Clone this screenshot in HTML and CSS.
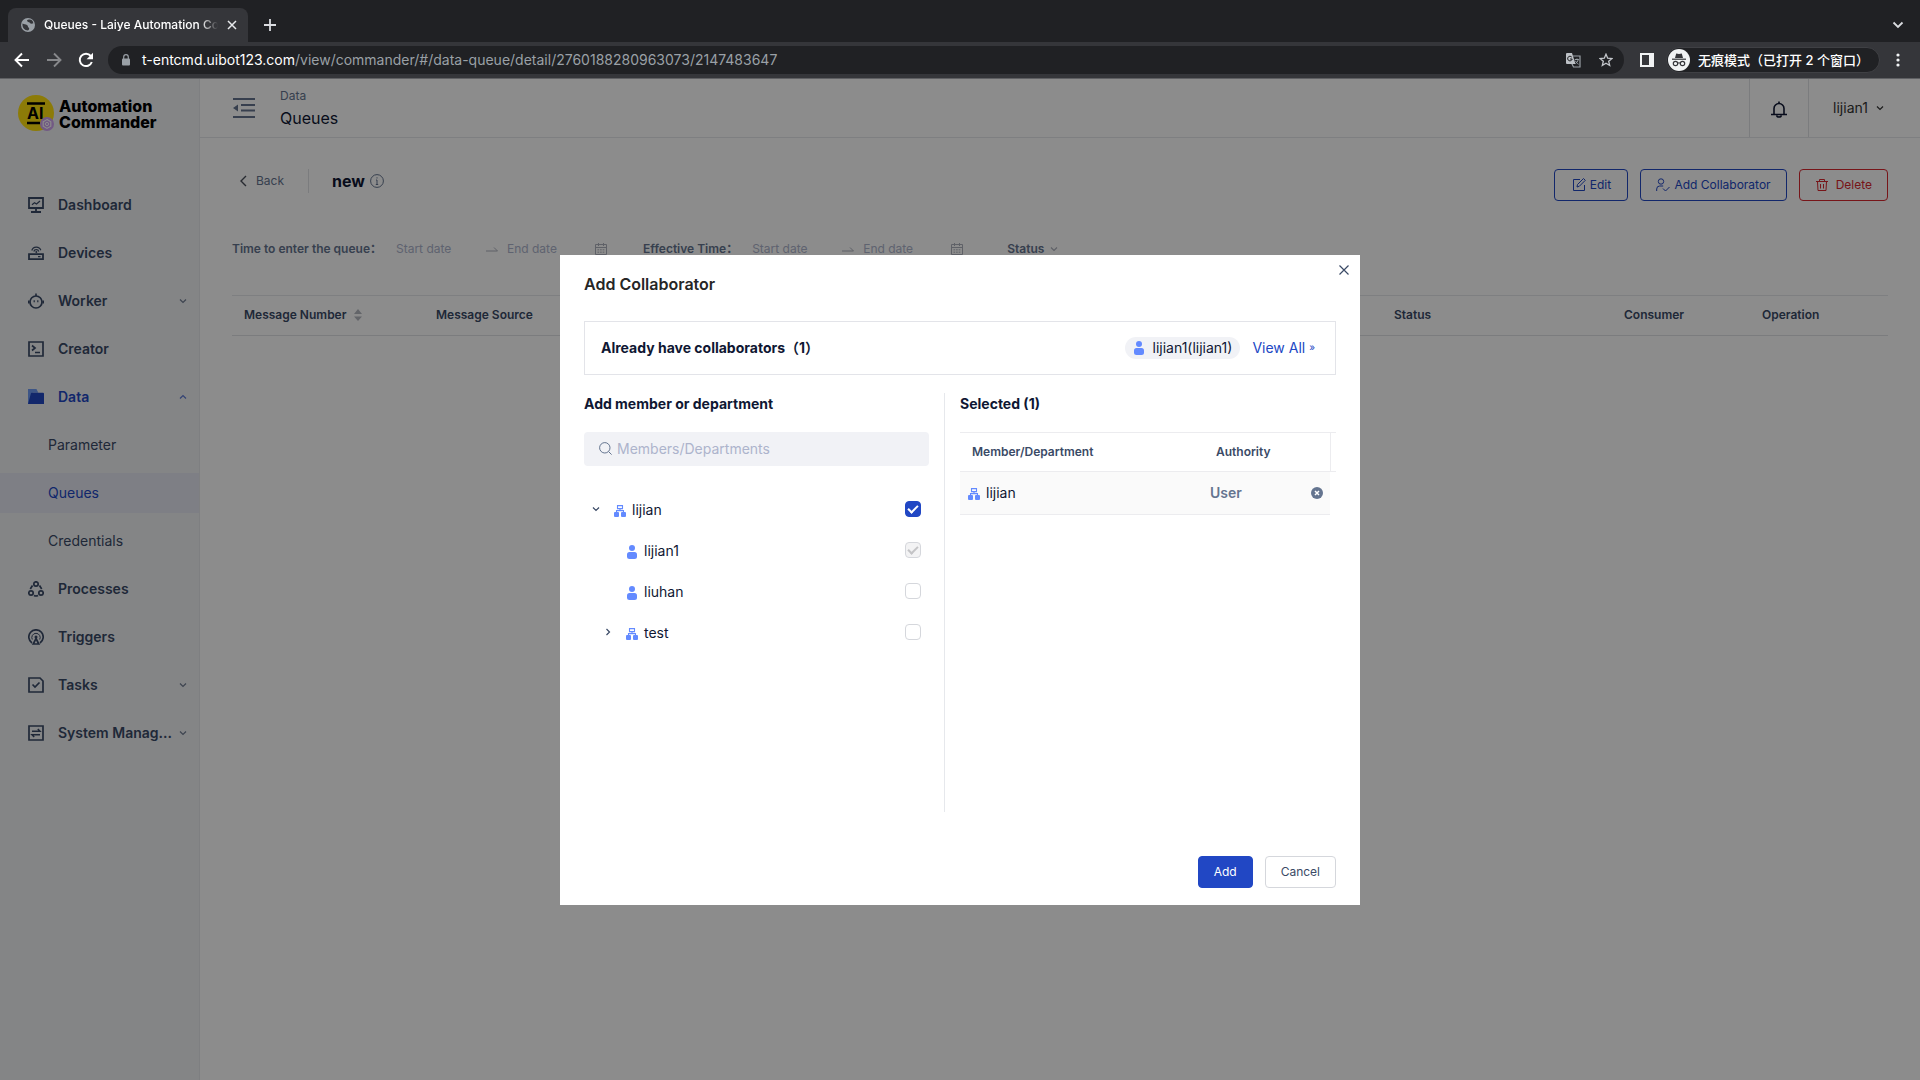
FILE: index.html
```html
<!DOCTYPE html>
<html lang="en">
<head>
    <meta charset="UTF-8">
    <meta name="viewport" content="width=device-width, initial-scale=1.0">
    <title>Queues - Laiye Automation Commander</title>
    <link rel="stylesheet" href="styles.css">
</head>
<body>
    <!-- shared symbols -->
    <svg class="symbols" width="0" height="0" aria-hidden="true">
        <symbol id="down" viewBox="0 0 8 8"><path d="M1 2.5l3 3 3-3" fill="none" stroke="currentColor" stroke-width="1.2"/></symbol>
        <symbol id="user" viewBox="0 0 12 16"><circle cx="6" cy="4" r="3" fill="currentColor"/><rect x="1" y="8" width="10" height="7" rx="2.5" fill="currentColor"/></symbol>
        <symbol id="dept" viewBox="0 0 12 12"><path d="M3.5.6h5v3h-5zM6 3.6v2M2.5 7V5.6h7V7" fill="none" stroke="currentColor" stroke-width="1.1"/><rect x="0" y="7" width="5" height="5" rx="1" fill="currentColor"/><rect x="7" y="7" width="5" height="5" rx="1" fill="currentColor"/></symbol>
        <symbol id="calendar" viewBox="0 0 12 14"><path d="M.5 2.5h11v10H.5zM.5 5.5h11M3.5 1v3M8.5 1v3" fill="none" stroke="currentColor"/><path d="M2.5 7.8h7M2.5 10.2h7" fill="none" stroke="currentColor" stroke-dasharray="1.6 1"/></symbol>
        <symbol id="arrow" viewBox="0 0 12 6"><path d="M0 5h11.5L8 1.5" fill="none" stroke="currentColor"/></symbol>
    </svg>

    <header class="browser">
        <div class="tabs">
            <div class="tab">
                <svg width="14" height="14" viewBox="0 0 14 14"><circle cx="7" cy="7" r="7" fill="#9aa0a6"/><path d="M8 1.5c-2 0-2.500 1-1.500 2s2 .5 2.500 1.500c.5 1 2 .5 3.200.5C12.500 3 10.500 1.500 8 1.500zM1.500 5.500c1.500 1 3 .5 4.500 1.500s.5 2 1.500 2.500 1 2-.5 3C3.500 12.500 1 9.500 1.500 5.500z" fill="#35363a"/></svg>
                <span class="tab-title">Queues - Laiye Automation Commander</span>
                <button class="icon-btn" aria-label="Close tab"><svg width="10" height="10" viewBox="0 0 10 10"><path d="M1 1l8 8M9 1l-8 8" stroke="#e8eaed" stroke-width="1.500"/></svg></button>
            </div>
            <button class="icon-btn new-tab" aria-label="New tab"><svg width="12" height="12" viewBox="0 0 12 12"><path d="M6 0v12M0 6h12" stroke="#dadce0" stroke-width="1.800"/></svg></button>
            <button class="icon-btn tab-search" aria-label="Search tabs"><svg width="12" height="8" viewBox="0 0 12 8"><path d="M1.500 1.500L6 6l4.500-4.500" fill="none" stroke="#dadce0" stroke-width="1.800"/></svg></button>
        </div>
        <div class="toolbar">
            <button class="icon-btn" aria-label="Back"><svg width="16" height="16" viewBox="0 0 16 16"><path d="M15 8H2.500M8 1.500L1.500 8 8 14.500" fill="none" stroke="#fff" stroke-width="1.900"/></svg></button>
            <button class="icon-btn" aria-label="Forward"><svg width="16" height="16" viewBox="0 0 16 16"><path d="M1 8h12.500M8 1.500L14.500 8 8 14.500" fill="none" stroke="#87888b" stroke-width="1.900"/></svg></button>
            <button class="icon-btn" aria-label="Reload"><svg width="16" height="16" viewBox="0 0 16 16"><path d="M13.800 10A6.200 6.200 0 1 1 12.800 4" fill="none" stroke="#fff" stroke-width="2"/><path d="M15 .8v6.400H8.600z" fill="#fff"/></svg></button>
            <div class="address">
                <svg width="10" height="12" viewBox="0 0 10 12"><rect x="1" y="4.500" width="8" height="7" rx="1" fill="#9aa0a6"/><path d="M2.700 5V3a2.300 2.300 0 0 1 4.600 0v2" fill="none" stroke="#9aa0a6" stroke-width="1.200"/></svg>
                <span class="url"><b>t-entcmd.uibot123.com</b>/view/commander/#/data-queue/detail/2760188280963073/2147483647</span>
                <svg width="15" height="15" viewBox="0 0 15 15"><path d="M6.500 3h7.500v11H7.500L5 9" fill="none" stroke="#9aa0a6" stroke-width="1.200"/><path d="M1 0h5l3.500 11H1a1 1 0 0 1-1-1V1a1 1 0 0 1 1-1z" fill="#bdc1c6"/><path d="M5.800 4.200A2.300 2.300 0 1 0 6.200 6H4" fill="none" stroke="#202124"/><path d="M8.800 6.500h4M11 5.500v1M12.200 6.500c-.3 2-1.500 3.200-2.700 4M9.500 7.800c.5 1.500 1.700 2.700 3 3.400" fill="none" stroke="#9aa0a6"/></svg>
                <svg class="star" width="14" height="14" viewBox="0 0 14 14"><path d="M7 1.200l1.700 4 4.300.3-3.300 2.800 1 4.200L7 10.300l-3.700 2.200 1-4.200L1 5.500l4.300-.3z" fill="none" stroke="#c4c7cc" stroke-width="1.300"/></svg>
            </div>
            <button class="icon-btn" aria-label="Side panel"><svg width="14" height="14" viewBox="0 0 14 14"><path d="M0 0h14v14H0zM2 2v10h7V2z" fill="#f1f3f4" fill-rule="evenodd"/></svg></button>
            <button class="incognito" lang="zh-CN">
                <svg width="22" height="22" viewBox="0 0 22 22"><circle cx="11" cy="11" r="11" fill="#f1f3f4"/><path d="M7 9l1.200-4.500L11 5l2.800-.5L15 9z" fill="#35363a"/><path d="M4 10.200h14" stroke="#35363a" stroke-width="1.200"/><circle cx="7.500" cy="14.500" r="2.200" fill="none" stroke="#35363a" stroke-width="1.200"/><circle cx="14.500" cy="14.500" r="2.200" fill="none" stroke="#35363a" stroke-width="1.200"/><path d="M9.700 14.200q1.300-.8 2.600 0" fill="none" stroke="#35363a"/></svg>
                无痕模式（已打开 2 个窗口）
            </button>
            <button class="icon-btn" aria-label="Menu"><svg width="4" height="14" viewBox="0 0 4 14"><circle cx="2" cy="2" r="1.600" fill="#f1f3f4"/><circle cx="2" cy="7" r="1.600" fill="#f1f3f4"/><circle cx="2" cy="12" r="1.600" fill="#f1f3f4"/></svg></button>
        </div>
    </header>

    <div class="app">
        <aside class="sidebar">
            <div class="logo">
                <svg width="38" height="38" viewBox="0 0 38 38">
                    <circle cx="18" cy="18" r="18" fill="#ffe00f"/>
                    <path d="M9 8.500h18M9 28h13" stroke="#000" stroke-width="2.400"/>
                    <text x="9" y="24" class="logo-mark">AI</text>
                    <circle cx="29" cy="29" r="7" fill="#cfa2f0"/>
                    <path d="M29 24.600l3.800 2.200v4.400L29 33.400l-3.800-2.200v-4.400z" fill="none" stroke="#fff" stroke-width="1.200"/><circle cx="29" cy="29" r="1.600" fill="none" stroke="#fff"/>
                </svg>
                <span>Automation<br>Commander</span>
            </div>
            <nav class="menu">
                <a href="#" class="item"><svg width="16" height="16" viewBox="0 0 16 16"><path d="M1 1h14v10H1zM8 11v3.500M3 15h10" fill="none" stroke="currentColor" stroke-width="1.800"/><path d="M4 7.800l2.500-2 2 1.200L12 4" fill="none" stroke="currentColor" stroke-width="1.200"/></svg><span>Dashboard</span></a>
                <a href="#" class="item"><svg width="16" height="16" viewBox="0 0 16 16"><path d="M1 9.200h14v5H1z" fill="none" stroke="currentColor" stroke-width="1.800"/><path d="M10 11.700h2.500M3.800 5.500a4.700 4.700 0 0 1 9-.2M5.800 6.500a2.600 2.600 0 0 1 5 0" fill="none" stroke="currentColor" stroke-width="1.200"/><circle cx="8.300" cy="7" r="1" fill="currentColor"/></svg><span>Devices</span></a>
                <a href="#" class="item"><svg width="16" height="16" viewBox="0 0 16 16"><circle cx="8" cy="9" r="6" fill="none" stroke="currentColor" stroke-width="1.700"/><path d="M8 .5V3M.8 7.500v3M15.200 7.500v3" stroke="currentColor" stroke-width="1.600"/><path d="M6.200 7.200v2M9.800 7.200v2" stroke="currentColor" stroke-width="1.200"/></svg><span>Worker</span><svg class="caret" width="8" height="8"><use href="#down"/></svg></a>
                <a href="#" class="item"><svg width="16" height="16" viewBox="0 0 16 16"><path d="M1 1h14v14H1zM4 4.500L7 7 4 9.500M7 11.500h5" fill="none" stroke="currentColor" stroke-width="1.700"/></svg><span>Creator</span></a>
                <a href="#" class="item active"><svg width="16" height="16" viewBox="0 0 17 17"><path d="M0 0h9l2 4H5L2 16H0z" fill="#6f9cf5"/><path d="M4 4h12a1 1 0 0 1 1 1v11H0L3 5a1 1 0 0 1 1-1z" fill="currentColor"/></svg><span>Data</span><svg class="caret up" width="8" height="8"><use href="#down"/></svg></a>
                <a href="#" class="sub">Parameter</a>
                <a href="#" class="sub active">Queues</a>
                <a href="#" class="sub">Credentials</a>
                <a href="#" class="item"><svg width="16" height="16" viewBox="0 0 16 16"><g fill="none" stroke="currentColor" stroke-width="1.700"><circle cx="8" cy="3" r="2.200"/><circle cx="3" cy="12" r="2.200"/><circle cx="13" cy="12" r="2.200"/><path d="M4.500 4.500L2.300 8M11.500 4.500L13.700 8M6 14.500q2 1 4 0"/></g></svg><span>Processes</span></a>
                <a href="#" class="item"><svg width="16" height="16" viewBox="0 0 16 16"><path d="M4 14a7.200 7.200 0 1 1 8 0" fill="none" stroke="currentColor" stroke-width="1.700"/><path d="M4.300 10.500a4.200 4.200 0 1 1 7.400 0" fill="none" stroke="currentColor"/><path d="M8 9.500l2.800 5.500H5.200z" fill="none" stroke="currentColor" stroke-width="1.700"/><circle cx="8" cy="8" r="1.500" fill="currentColor"/></svg><span>Triggers</span></a>
                <a href="#" class="item"><svg width="16" height="16" viewBox="0 0 16 16"><path d="M1 1h11l3 3v11H1zM4.500 7.500l2.500 2.500 4.500-4.500" fill="none" stroke="currentColor" stroke-width="1.700"/></svg><span>Tasks</span><svg class="caret" width="8" height="8"><use href="#down"/></svg></a>
                <a href="#" class="item"><svg width="16" height="16" viewBox="0 0 16 16"><path d="M1 1h14v14H1z" fill="none" stroke="currentColor" stroke-width="1.700"/><path d="M4 6.300h8L9.800 4M12 9.700H4L6.200 12" fill="none" stroke="currentColor" stroke-width="1.500"/></svg><span>System Manag...</span><svg class="caret" width="8" height="8"><use href="#down"/></svg></a>
            </nav>
        </aside>

        <main class="main">
            <div class="topbar">
                <button class="icon-btn" aria-label="Collapse menu"><svg width="22" height="20" viewBox="0 0 22 20"><path d="M0 1h22M8 7h14M8 12.500h14M0 19h22" stroke="#64748f" stroke-width="1.800"/><path d="M5 6.500v7L0 10z" fill="#64748f"/></svg></button>
                <div class="crumbs">
                    <span>Data</span>
                    <h1>Queues</h1>
                </div>
                <button class="bell" aria-label="Notifications"><svg width="16" height="17" viewBox="0 0 16 17"><path d="M3 13V7.500a5 5 0 0 1 10 0V13" fill="none" stroke="currentColor" stroke-width="1.600"/><path d="M0 13.500h16M8 .5v2M5.800 14.500a2.200 1.500 0 0 0 4.400 0" fill="none" stroke="currentColor" stroke-width="1.600"/></svg></button>
                <button class="account">lijian1 <svg width="8" height="8"><use href="#down"/></svg></button>
            </div>

            <div class="content">
                <div class="page-head">
                    <a href="#" class="back"><svg width="7" height="12" viewBox="0 0 7 12"><path d="M6 1L1 6l5 5" fill="none" stroke="#4a4f5a" stroke-width="1.400"/></svg>Back</a>
                    <h2>new</h2>
                    <svg class="info" width="14" height="14" viewBox="0 0 14 14"><circle cx="7" cy="7" r="6.400" fill="none" stroke="currentColor"/><path d="M7 3.300v1.200M7 6v4.500M6 6h1M5.800 10.500h2.400" stroke="currentColor"/></svg>
                    <div class="actions">
                        <button class="btn outline"><svg width="14" height="14" viewBox="0 0 14 14"><path d="M8 1.500H1.500v11h11V7M5 9l.5-2.500 6-6 1.800 1.800-6 6z" fill="none" stroke="currentColor"/></svg>Edit</button>
                        <button class="btn outline"><svg width="14" height="14" viewBox="0 0 14 14"><circle cx="5" cy="3.500" r="2.700" fill="none" stroke="currentColor"/><path d="M.7 13V11a3 3 0 0 1 3-3h3.500M7 10.500l2.500 2.500L13.500 9" fill="none" stroke="currentColor"/></svg>Add Collaborator</button>
                        <button class="btn danger"><svg width="14" height="14" viewBox="0 0 14 14"><path d="M1 3.500h12M4.500 3V1.500h5V3M2.500 3.500l.5 9h8l.5-9M5.500 6v4.500M8.500 6v4.500" fill="none" stroke="currentColor"/></svg>Delete</button>
                    </div>
                </div>

                <div class="filters">
                    <label for="queueStart">Time to enter the queue：</label>
                    <div class="range">
                        <input type="text" id="queueStart" placeholder="Start date">
                        <svg width="12" height="6"><use href="#arrow"/></svg>
                        <input type="text" aria-label="Queue end date" placeholder="End date">
                        <svg width="12" height="14"><use href="#calendar"/></svg>
                    </div>
                    <label for="effStart">Effective Time：</label>
                    <div class="range">
                        <input type="text" id="effStart" placeholder="Start date">
                        <svg width="12" height="6"><use href="#arrow"/></svg>
                        <input type="text" aria-label="Effective end date" placeholder="End date">
                        <svg width="12" height="14"><use href="#calendar"/></svg>
                    </div>
                    <button class="status">Status <svg width="8" height="8"><use href="#down"/></svg></button>
                </div>

                <table class="grid">
                    <colgroup><col class="c-std"><col class="c-std"><col><col class="c-status"><col class="c-end"><col class="c-end"></colgroup>
                    <thead>
                        <tr>
                            <th>Message Number <svg class="sort" width="8" height="12" viewBox="0 0 8 12"><path d="M4 0l4 5H0zM4 12L0 7.500h8z" fill="#b4b8c0"/></svg></th>
                            <th>Message Source</th>
                            <th></th>
                            <th>Status</th>
                            <th>Consumer</th>
                            <th>Operation</th>
                        </tr>
                    </thead>
                </table>
            </div>
        </main>

        <div class="mask">
            <section class="modal" role="dialog" aria-labelledby="modalTitle">
                <button class="icon-btn close" aria-label="Close"><svg width="10" height="10" viewBox="0 0 10 10"><path d="M.5.5l9 9M9.500.5l-9 9" stroke="#3a4a66" stroke-width="1.200"/></svg></button>
                <h2 id="modalTitle">Add Collaborator</h2>

                <div class="existing">
                    <strong>Already have collaborators（1）</strong>
                    <span class="tag"><svg width="12" height="16"><use href="#user"/></svg>lijian1(lijian1)</span>
                    <a href="#">View All <small>»</small></a>
                </div>

                <div class="columns">
                    <div class="picker">
                        <h3>Add member or department</h3>
                        <div class="search">
                            <svg width="13" height="13" viewBox="0 0 13 13"><circle cx="5.800" cy="5.800" r="5.200" fill="none" stroke="#64748f"/><path d="M9.600 9.600l3 3" stroke="#64748f"/></svg>
                            <input type="text" aria-label="Members/Departments" placeholder="Members/Departments">
                        </div>
                        <ul class="tree">
                            <li>
                                <svg class="fold" width="8" height="8"><use href="#down"/></svg>
                                <svg class="ico" width="12" height="12"><use href="#dept"/></svg>
                                <label for="m1">lijian</label>
                                <input type="checkbox" id="m1" checked>
                            </li>
                            <li class="child">
                                <svg class="ico" width="12" height="16"><use href="#user"/></svg>
                                <label for="m2">lijian1</label>
                                <input type="checkbox" id="m2" checked disabled>
                            </li>
                            <li class="child">
                                <svg class="ico" width="12" height="16"><use href="#user"/></svg>
                                <label for="m3">liuhan</label>
                                <input type="checkbox" id="m3">
                            </li>
                            <li class="branch">
                                <svg class="fold closed" width="8" height="8"><use href="#down"/></svg>
                                <svg class="ico" width="12" height="12"><use href="#dept"/></svg>
                                <label for="m4">test</label>
                                <input type="checkbox" id="m4">
                            </li>
                        </ul>
                    </div>

                    <div class="selected">
                        <h3>Selected (1)</h3>
                        <table class="members">
                            <colgroup><col><col class="c-auth"><col class="c-del"><col class="c-scroll"></colgroup>
                            <thead>
                                <tr><th>Member/Department</th><th colspan="2">Authority</th><th class="gutter"></th></tr>
                            </thead>
                            <tbody>
                                <tr>
                                    <td><span class="member"><svg class="ico" width="12" height="12"><use href="#dept"/></svg>lijian</span></td>
                                    <td class="role">User</td>
                                    <td><button class="icon-btn" aria-label="Remove"><svg width="12" height="12" viewBox="0 0 12 12"><circle cx="6" cy="6" r="6" fill="#64748f"/><path d="M4 4l4 4M8 4L4 8" stroke="#fff" stroke-width="1.500"/></svg></button></td>
                                    <td class="gutter"></td>
                                </tr>
                            </tbody>
                        </table>
                    </div>
                </div>

                <div class="modal-foot">
                    <button class="btn primary">Add</button>
                    <button class="btn">Cancel</button>
                </div>
            </section>
        </div>
    </div>
</body>
</html>
```
FILE: styles.css
```css
* { box-sizing: border-box; }
body { margin: 0; height: 100vh; display: flex; flex-direction: column; overflow: hidden; font-family: Inter, "Noto Sans CJK SC", sans-serif; font-size: 14px; line-height: 22px; color: #0f1733; }
h1, h2, h3 { margin: 0; }
a { color: inherit; text-decoration: none; }
svg { display: block; flex: none; }
button, input { font: inherit; color: inherit; }
input::placeholder { color: #adb4cc; opacity: 1; }
.symbols { position: absolute; }
.icon-btn { display: flex; padding: 0; border: 0; background: none; }

/* browser window */
.browser { flex: none; border-bottom: 1px solid #5f6063; background: #35363a; }
.tabs { display: flex; align-items: center; height: 42px; padding: 8px 16px 0 8px; background: #202124; }
.tab { display: flex; align-items: center; gap: 9px; width: 240px; height: 34px; padding: 0 11px 0 13px; border-radius: 8px 8px 0 0; background: #35363a; }
.tab-title { flex: 1; overflow: hidden; white-space: nowrap; font-size: 12px; font-weight: 500; color: #fff; -webkit-mask-image: linear-gradient(90deg, #000 90%, transparent); mask-image: linear-gradient(90deg, #000 90%, transparent); }
.new-tab { margin-left: 16px; }
.tab-search { margin-left: auto; }
.toolbar { display: flex; align-items: center; gap: 16px; height: 36px; padding: 0 20px 0 14px; }
.address { flex: 1; display: flex; align-items: center; height: 28px; margin-left: -2px; padding: 0 11px 0 13px; border-radius: 14px; background: #202124; color: #9aa0a6; }
.url { flex: 1; margin-left: 11px; }
.url b { font-weight: 400; color: #fff; }
.star { margin-left: 18px; }
.incognito { display: flex; align-items: center; gap: 8px; height: 26px; margin-left: -4px; padding: 0 10px 0 1px; border: 1px solid #3f4044; border-radius: 13px; background: #202124; color: #fff; font-size: 13px; font-weight: 500; }

/* app */
.app { position: relative; flex: 1; display: flex; min-height: 0; background: #fff; }
.sidebar { flex: none; width: 200px; border-right: 1px solid #e6e8ec; background: #f0f2f5; }
.logo { display: flex; align-items: center; gap: 3px; height: 74px; padding: 0 0 4px 18px; font-size: 16px; font-weight: 800; line-height: 16px; color: #000; }
.logo-mark { font: 700 16px Inter, sans-serif; }
.menu { display: flex; flex-direction: column; gap: 8px; padding-top: 32px; color: #3a4a66; }
.item { display: flex; align-items: center; gap: 14px; height: 40px; padding: 0 12px 0 28px; font-weight: 600; }
.item span { flex: 1; white-space: nowrap; }
.caret { margin-left: -12px; opacity: 0.7; }
.up { transform: rotate(180deg); }
.sub { height: 40px; padding-left: 48px; line-height: 40px; }
.menu .active { color: #2147c4; }
.sub.active { background: #e6e8f2; }
.main { flex: 1; min-width: 0; }
.topbar { display: flex; align-items: center; height: 59px; padding-left: 33px; border-bottom: 1px solid #e6e8ec; }
.crumbs { flex: 1; margin-left: 25px; }
.crumbs span { display: block; font-size: 12px; line-height: 20px; color: #64748f; }
.crumbs h1 { font-size: 16px; font-weight: 400; line-height: 24px; }
.bell, .account { display: flex; align-items: center; justify-content: center; height: 100%; padding: 0; border: 0; border-left: 1px solid #e0e2e6; background: none; }
.bell { width: 59px; padding-top: 2px; }
.account { gap: 8px; width: 112px; padding-right: 12px; color: #333; }

.content { padding: 31px 32px 0; }
.page-head { display: flex; align-items: flex-start; }
.back { display: flex; align-items: center; gap: 9px; height: 24px; padding: 0 24px 0 8px; border-right: 1px solid #e0e2e6; font-size: 12px; color: #64748f; }
.page-head h2 { margin-left: 23px; font-size: 16px; line-height: 24px; }
.info { margin: 5px 0 0 5px; color: #64748f; }
.actions { display: flex; gap: 12px; margin-left: auto; }
.btn { display: flex; align-items: center; justify-content: center; gap: 4px; height: 32px; padding: 0 15px; border: 1px solid #d5d7dc; border-radius: 4px; background: #fff; color: #3a4a66; font-size: 12px; }
.btn.outline { min-width: 74px; border-color: #2147c4; color: #2147c4; }
.btn.danger { gap: 7px; border-color: #d9272e; color: #d9272e; }
.btn.primary { border-color: #2147c4; background: #2147c4; color: #fff; }

.filters { display: flex; align-items: center; height: 22px; margin-top: 37px; font-size: 12px; }
.filters label { margin-right: 14px; font-weight: 600; color: #64748f; }
.range { display: flex; align-items: center; margin-right: 36px; color: #adb1bc; }
.range input { width: 90px; padding: 0; border: 0; background: none; }
.range input + svg + input { width: 88px; margin-left: 9px; }
.status { display: flex; align-items: center; gap: 6px; padding: 0 0 0 8px; border: 0; background: none; font-weight: 600; color: #64748f; }
.status svg { color: #adb1bc; }

table { width: 100%; border-collapse: separate; border-spacing: 0; table-layout: fixed; }
th { text-align: left; font-size: 12px; font-weight: 600; color: #3a4a66; }
.grid { margin-top: 35px; }
.grid th { height: 41px; padding: 0 12px 2px; border-top: 1px solid #e6e8ec; border-bottom: 1px solid #e0e2e6; white-space: nowrap; }
.sort { display: inline-block; margin-left: 4px; vertical-align: -2px; }
.c-std { width: 192px; }
.c-status { width: 230px; }
.c-end { width: 138px; }

/* modal */
.mask { position: absolute; inset: 0; display: flex; align-items: center; justify-content: center; background: rgba(0, 0, 0, 0.45); }
.modal { position: relative; display: flex; flex-direction: column; width: 800px; min-height: 650px; padding: 17px 24px; background: #fff; }
.close { position: absolute; top: 10px; right: 11px; }
.modal h2 { font-size: 16px; font-weight: 600; line-height: 24px; color: #262626; }
.modal h3 { font-size: 14px; font-weight: 700; line-height: 22px; }
.existing { display: flex; align-items: center; gap: 12px; height: 54px; margin-top: 25px; padding: 0 20px 0 16px; border: 1px solid #e3e4e9; }
.existing strong { flex: 1; font-weight: 700; }
.existing a { display: flex; gap: 4px; color: #2147c4; }
.existing small { font-size: 10px; line-height: 20px; }
.tag { display: flex; align-items: center; gap: 7px; height: 22px; padding: 0 8px; border-radius: 11px; background: #f1f2f6; }
.tag svg, .ico { color: #638aff; }
.columns { flex: 1; display: flex; margin: 18px 0 44px; }
.picker { flex: none; width: 361px; padding-right: 15px; border-right: 1px solid #e6e8ec; }
.selected { flex: 1; padding-left: 15px; }
.search { display: flex; align-items: center; gap: 5px; height: 34px; margin-top: 17px; padding: 0 15px; border-radius: 4px; background: #f1f2f6; }
.search input { flex: 1; padding: 0; border: 0; background: none; }
.tree { margin: 23px 0 0; padding: 0 8px; list-style: none; }
.tree li { display: flex; align-items: center; height: 41px; }
.tree label { flex: 1; margin-left: 6px; padding-top: 2px; }
.ico { margin-top: 3px; }
.fold { margin-right: 14px; color: #3a4a66; }
.closed { transform: rotate(-90deg); }
.tree .child { padding-left: 34px; }
.tree .branch { padding-left: 12px; }
.tree input { appearance: none; width: 16px; height: 16px; margin: 0; border: 1px solid #d5d7dc; border-radius: 4px; background: #fff; }
.tree input:checked { display: grid; place-items: center; border-color: #2147c4; background: #2147c4; color: #fff; }
.tree input:checked::before { content: ""; box-sizing: border-box; width: 10px; height: 6px; margin-bottom: 3px; border: solid currentColor; border-width: 0 0 2px 2px; transform: rotate(-45deg); }
.tree input:disabled { border-color: #d5d7dc; background: #f3f3f4; color: #c4c4c6; }
.members { margin-top: 17px; }
.members th { height: 40px; padding: 0 12px; border-top: 1px solid #ececef; border-bottom: 1px solid #ececef; }
.members td { height: 43px; padding: 0 6px; border-bottom: 1px solid #ececef; background: #fafafa; }
.members .gutter { padding: 0; border-left: 1px solid #ececef; }
.members td.gutter { border: 0; background: none; }
.member { display: flex; align-items: center; gap: 6px; padding-left: 2px; }
.members .role { font-weight: 600; color: #64748f; }
.c-auth { width: 101px; }
.c-del { width: 25px; }
.c-scroll { width: 6px; }
.modal-foot { display: flex; justify-content: flex-end; gap: 12px; }
```
